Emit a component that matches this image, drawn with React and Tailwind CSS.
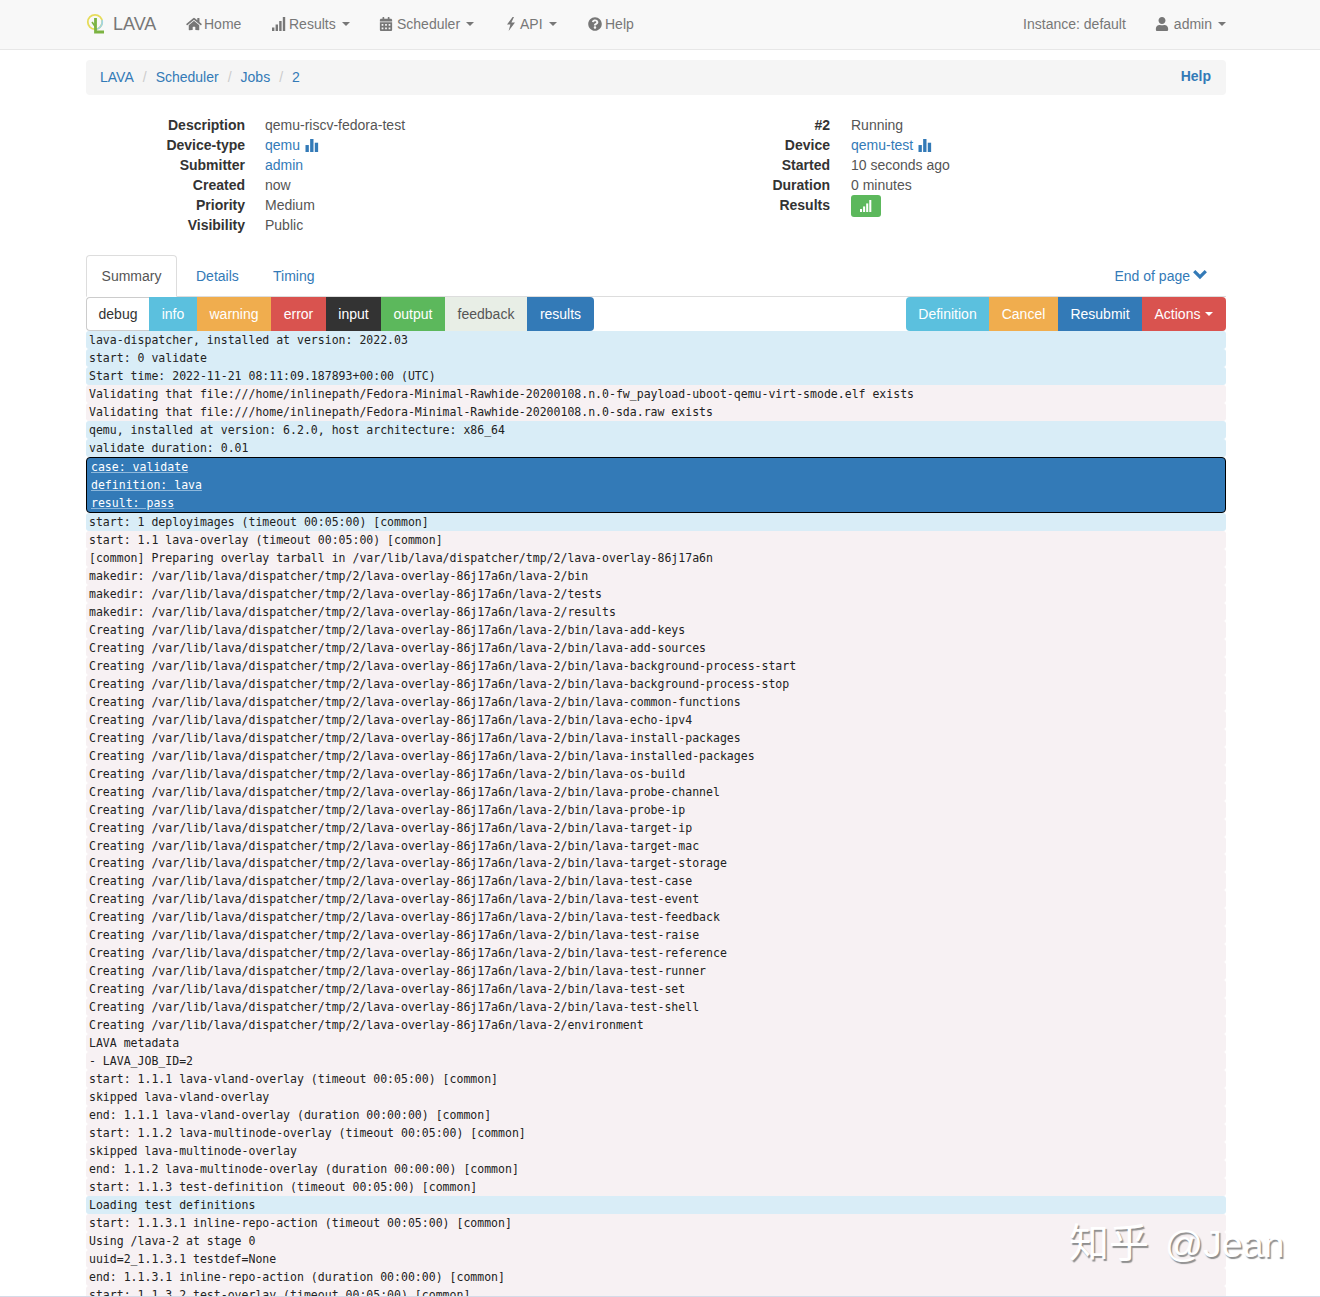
import { FaHome, FaCalendarAlt, FaQuestionCircle, FaUser } from 'react-icons/fa';

const LINK = 'text-[#337ab7]';

const NAV = [
  { label: 'Home', icon: 'home', width: 'w-[86px]' },
  { label: 'Results', icon: 'signal', caret: true, width: 'w-[107px]' },
  { label: 'Scheduler', icon: 'calendar', caret: true, width: 'w-[127px]' },
  { label: 'API', icon: 'flash', caret: true, width: 'w-[82px]' },
  { label: 'Help', icon: 'help', width: 'w-[77px]' },
];

const LEFT_META = [
  ['Description', 'qemu-riscv-fedora-test'],
  ['Device-type', 'qemu', 'link', 'stats'],
  ['Submitter', 'admin', 'link'],
  ['Created', 'now'],
  ['Priority', 'Medium'],
  ['Visibility', 'Public'],
];

const RIGHT_META = [
  ['#2', 'Running'],
  ['Device', 'qemu-test', 'link', 'stats'],
  ['Started', '10 seconds ago'],
  ['Duration', '0 minutes'],
];

const LEVELS = [
  { label: 'debug', cls: 'w-[63px] bg-white text-[#333] border border-[#ccc] border-r-0 rounded-l-[4px]' },
  { label: 'info', cls: 'w-[48px] bg-[#5bc0de] text-white' },
  { label: 'warning', cls: 'w-[74px] bg-[#f0ad4e] text-white' },
  { label: 'error', cls: 'w-[55px] bg-[#d9534f] text-white' },
  { label: 'input', cls: 'w-[55px] bg-[#333] text-white' },
  { label: 'output', cls: 'w-[64px] bg-[#5cb85c] text-white' },
  { label: 'feedback', cls: 'w-[82px] bg-[#e8eee6] text-[#555]' },
  { label: 'results', cls: 'w-[67px] bg-[#337ab7] text-white rounded-r-[4px]' },
];

const ACTIONS = [
  { label: 'Definition', cls: 'w-[83px] bg-[#5bc0de] rounded-l-[4px]' },
  { label: 'Cancel', cls: 'w-[69px] bg-[#f0ad4e]' },
  { label: 'Resubmit', cls: 'w-[84px] bg-[#337ab7]' },
  { label: 'Actions', cls: 'w-[84px] bg-[#d9534f] rounded-r-[4px]', caret: true },
];

const OVERLAY = '/var/lib/lava/dispatcher/tmp/2/lava-overlay-86j17a6n/lava-2';
const FEDORA = 'Validating that file:///home/inlinepath/Fedora-Minimal-Rawhide-20200108.n.0';

const binScripts = [
  'add-keys', 'add-sources', 'background-process-start', 'background-process-stop', 'common-functions',
  'echo-ipv4', 'install-packages', 'installed-packages', 'os-build', 'probe-channel', 'probe-ip', 'target-ip',
  'target-mac', 'target-storage', 'test-case', 'test-event', 'test-feedback', 'test-raise', 'test-reference',
  'test-runner', 'test-set', 'test-shell',
];

const TOP_LOG = [
  ['info', 'lava-dispatcher, installed at version: 2022.03'],
  ['info', 'start: 0 validate'],
  ['info', 'Start time: 2022-11-21 08:11:09.187893+00:00 (UTC)'],
  ['debug', `${FEDORA}-fw_payload-uboot-qemu-virt-smode.elf exists`],
  ['debug', `${FEDORA}-sda.raw exists`],
  ['info', 'qemu, installed at version: 6.2.0, host architecture: x86_64'],
  ['info', 'validate duration: 0.01'],
];

const BOTTOM_LOG = [
  ['info', 'start: 1 deployimages (timeout 00:05:00) [common]'],
  ['debug', 'start: 1.1 lava-overlay (timeout 00:05:00) [common]'],
  ['debug', '[common] Preparing overlay tarball in /var/lib/lava/dispatcher/tmp/2/lava-overlay-86j17a6n'],
  ['debug', `makedir: ${OVERLAY}/bin`],
  ['debug', `makedir: ${OVERLAY}/tests`],
  ['debug', `makedir: ${OVERLAY}/results`],
  ...binScripts.map((name) => ['debug', `Creating ${OVERLAY}/bin/lava-${name}`]),
  ['debug', `Creating ${OVERLAY}/environment`],
  ['debug', 'LAVA metadata'],
  ['debug', '- LAVA_JOB_ID=2'],
  ['debug', 'start: 1.1.1 lava-vland-overlay (timeout 00:05:00) [common]'],
  ['debug', 'skipped lava-vland-overlay'],
  ['debug', 'end: 1.1.1 lava-vland-overlay (duration 00:00:00) [common]'],
  ['debug', 'start: 1.1.2 lava-multinode-overlay (timeout 00:05:00) [common]'],
  ['debug', 'skipped lava-multinode-overlay'],
  ['debug', 'end: 1.1.2 lava-multinode-overlay (duration 00:00:00) [common]'],
  ['debug', 'start: 1.1.3 test-definition (timeout 00:05:00) [common]'],
  ['info', 'Loading test definitions'],
  ['debug', 'start: 1.1.3.1 inline-repo-action (timeout 00:05:00) [common]'],
  ['debug', 'Using /lava-2 at stage 0'],
  ['debug', 'uuid=2_1.1.3.1 testdef=None'],
  ['debug', 'end: 1.1.3.1 inline-repo-action (duration 00:00:00) [common]'],
  ['debug', 'start: 1.1.3.2 test-overlay (timeout 00:05:00) [common]'],
];

function Caret({ className }) {
  return <span className={`inline-block w-0 h-0 ml-[5px] align-middle border-x-[4px] border-x-transparent border-t-[4px] border-t-current ${className || ''}`} />;
}

function SignalIcon({ className }) {
  return (
    <svg viewBox="0 0 14 14" className={className} fill="currentColor">
      <rect x="0" y="10.5" width="2.4" height="3.5" />
      <rect x="3.6" y="7.5" width="2.4" height="6.5" />
      <rect x="7.2" y="4" width="2.4" height="10" />
      <rect x="10.8" y="0" width="2.4" height="14" />
    </svg>
  );
}

function StatsIcon({ className }) {
  return (
    <svg viewBox="0 0 14 14" className={className} fill="currentColor">
      <rect x="0" y="6.5" width="3.6" height="7.5" />
      <rect x="5" y="0" width="3.6" height="14" />
      <rect x="10" y="4" width="3.6" height="10" />
    </svg>
  );
}

function FlashIcon({ className }) {
  return (
    <svg viewBox="0 0 10 14" className={className} fill="currentColor">
      <path d="M6.6 0 L1 7.6 L4.4 7.6 L2.6 14 L9 5.6 L5.4 5.6 L8 0 Z" />
    </svg>
  );
}

function ChevronIcon({ className }) {
  return (
    <svg viewBox="0 0 14 11" className={className} fill="none" stroke="currentColor" strokeWidth="3.2">
      <path d="M1.2 2.2 L7 8 L12.8 2.2" />
    </svg>
  );
}

function NavIcon({ name }) {
  if (name === 'home') return <FaHome className="w-[16px] h-[14px] mr-[2px]" />;
  if (name === 'signal') return <SignalIcon className="w-[14px] h-[14px] mr-[3px]" />;
  if (name === 'calendar') return <FaCalendarAlt className="w-[14px] h-[14px] mr-[4px]" />;
  if (name === 'flash') return <FlashIcon className="w-[10px] h-[14px] mr-[4px]" />;
  return <FaQuestionCircle className="w-[14px] h-[14px] mr-[3px]" />;
}

function Logo() {
  return (
    <svg viewBox="0 0 20 22" className="w-[20px] h-[22px] shrink-0">
      <circle cx="9" cy="9" r="7.2" fill="none" stroke="#e6dc5a" strokeWidth="1.8" />
      <path d="M16 7 A7.2 7.2 0 0 1 9 16.2" fill="none" stroke="#9fd4e6" strokeWidth="1.6" />
      <path d="M9.5 5 L9.5 19 L18 19" fill="none" stroke="#7cb342" strokeWidth="2.8" />
      <path d="M6 9 L9.5 14" fill="none" stroke="#7cb342" strokeWidth="1.6" />
    </svg>
  );
}

function MetaList({ rows, children, className, gap }) {
  return (
    <div className={`flex flex-col ${className}`}>
      {rows.map(([key, value, kind, icon]) => (
        <div key={key} className="flex h-[20px] items-center">
          <div className="w-[159px] shrink-0 text-right font-bold text-[#333]">{key}</div>
          <div className={`${gap} flex items-center ${kind === 'link' ? LINK : 'text-[#555]'}`}>
            {value}
            {icon === 'stats' && <StatsIcon className="w-[14px] h-[13px] ml-[5px]" />}
          </div>
        </div>
      ))}
      {children}
    </div>
  );
}

function LogRow({ level, text }) {
  const bg = level === 'info' ? 'bg-[#d9edf7]' : 'bg-[#f7f1f3]';
  return <div className={`h-[17.974px] pl-[3px] rounded-[3px] leading-[18px] whitespace-pre text-[#222] ${bg}`}>{text}</div>;
}

export default function App() {
  return (
    <div className="relative h-[1297px] w-[1320px] overflow-hidden bg-white text-[14px] leading-[20px] text-[#333] font-['Liberation_Sans',Arial,sans-serif]">
      <header className="flex h-[50px] items-center border-b border-[#e7e7e7] bg-[#f8f8f8] pb-[2px] text-[#777] pl-[86px] pr-[94px]">
        <div className="flex w-[85px] shrink-0 items-center">
          <Logo />
          <span className="ml-[7px] text-[18px]">LAVA</span>
        </div>
        <nav className="flex items-center pl-[15px]">
          {NAV.map((item) => (
            <a key={item.label} className={`flex items-center ${item.width}`}>
              <NavIcon name={item.icon} />
              {item.label}
              {item.caret && <Caret className="ml-[6px]" />}
            </a>
          ))}
        </nav>
        <div className="ml-auto flex items-center">
          <span>Instance: default</span>
          <a className="ml-[29px] flex items-center">
            <FaUser className="w-[14px] h-[14px] mr-[5px]" />
            admin
            <Caret className="ml-[6px]" />
          </a>
        </div>
      </header>

      <main className="ml-[86px] w-[1140px] pt-[10px]">
        <div className="flex h-[35px] items-center justify-between rounded-[4px] bg-[#f5f5f5] pb-[2px] pl-[14px] pr-[15px]">
          <div className="flex items-center">
            <a className={LINK}>LAVA</a>
            <span className="px-[9px] text-[#ccc]">/</span>
            <a className={LINK}>Scheduler</a>
            <span className="px-[9px] text-[#ccc]">/</span>
            <a className={LINK}>Jobs</a>
            <span className="px-[9px] text-[#ccc]">/</span>
            <a className={LINK}>2</a>
          </div>
          <a className={`mb-[2px] font-bold ${LINK}`}>Help</a>
        </div>

        <section className="flex pt-[20px]">
          <MetaList rows={LEFT_META} className="w-[570px]" gap="ml-[20px]" />
          <MetaList rows={RIGHT_META} className="w-[570px] pl-[15px]" gap="ml-[21px]">
            <div className="flex h-[20px] items-center">
              <div className="w-[159px] shrink-0 text-right font-bold text-[#333]">Results</div>
              <span className="ml-[21px] mt-[2px] flex h-[22px] w-[30px] items-center justify-center rounded-[3px] bg-[#5cb85c] text-white">
                <SignalIcon className="w-[12px] h-[12px]" />
              </span>
            </div>
          </MetaList>
        </section>

        <div className="mt-[20px] flex h-[42px] items-end border-b border-[#ddd]">
          <a className="-mb-px flex h-[42px] w-[91px] items-center justify-center rounded-t-[4px] border border-[#ddd] border-b-white bg-white text-[#555]">Summary</a>
          <a className={`flex h-[41px] w-[81px] items-center pl-[19px] ${LINK}`}>Details</a>
          <a className={`flex h-[41px] items-center pl-[15px] ${LINK}`}>Timing</a>
          <a className={`ml-auto mr-[19px] flex h-[41px] items-center ${LINK}`}>
            End of page
            <ChevronIcon className="ml-[3px] mb-[2px] w-[14px] h-[11px]" />
          </a>
        </div>

        <div className="flex h-[34px] justify-between">
          <div className="flex">
            {LEVELS.map((b) => (
              <button key={b.label} className={`flex items-center justify-center ${b.cls}`}>{b.label}</button>
            ))}
          </div>
          <div className="flex text-white">
            {ACTIONS.map((b) => (
              <button key={b.label} className={`flex items-center justify-center ${b.cls}`}>
                {b.label}
                {b.caret && <Caret />}
              </button>
            ))}
          </div>
        </div>

        <div className="text-[11.52px] font-['DejaVu_Sans_Mono',monospace]">
          {TOP_LOG.map(([level, text], i) => <LogRow key={i} level={level} text={text} />)}
          <div className="h-[56.3px] rounded-[4px] border border-black bg-[#337ab7] pl-[4px] leading-[18px] text-white">
            <div className="h-[18px]"><span className="underline decoration-[#8db8dc]">case: validate</span></div>
            <div className="h-[18px]"><span className="underline decoration-[#8db8dc]">definition: lava</span></div>
            <div className="h-[18px]"><span className="underline decoration-[#8db8dc]">result: pass</span></div>
          </div>
          {BOTTOM_LOG.map(([level, text], i) => <LogRow key={i} level={level} text={text} />)}
        </div>
      </main>

      <div className="absolute bottom-0 left-0 right-0 h-px bg-[#d5dbe8]" />
      <div className="absolute left-[1069px] top-[1218px] flex items-baseline gap-[16px] leading-[50px] whitespace-nowrap text-white [text-shadow:1.5px_1.5px_1px_#8f8f8f] font-['Liberation_Sans','Noto_Sans_CJK_SC',sans-serif]">
        <span className="text-[40px]">知乎</span>
        <span className="text-[37.5px]">@Jean</span>
      </div>
    </div>
  );
}
